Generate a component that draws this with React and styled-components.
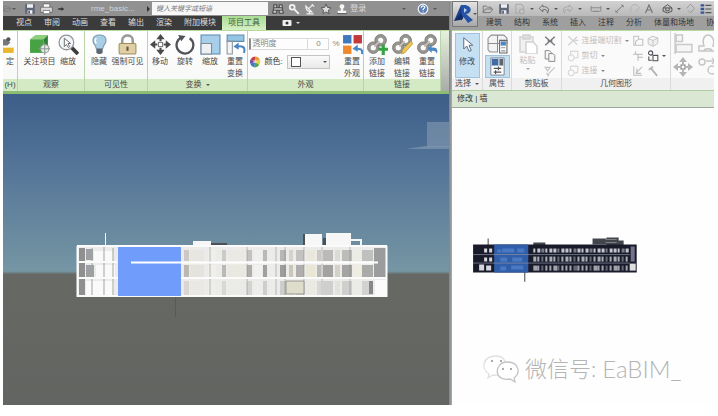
import React, { useState } from "react";
import styled, { createGlobalStyle } from "styled-components";

const GlobalStyle = createGlobalStyle`
  * {
    box-sizing: border-box;
  }
  body {
    margin: 0;
    background: #fff;
    font-family: "Liberation Sans", "Noto Sans CJK SC", sans-serif;
    font-size: 8px;
    line-height: 12px;
    color: #4a4a4a;
  }
  button, input, select {
    font: inherit;
    color: inherit;
    margin: 0;
    padding: 0;
    border: 0;
    background: none;
  }
  svg {
    display: block;
    flex: none;
  }
`;

/* ---------- icons ---------- */

const BLUE = "#4a87c4";
const PALE = "#d2d2d2";

const shapes = {
  folder: (
    <g fill="none" stroke="currentColor" strokeWidth="1.5">
      <path d="M2 16V5h5l2 2h6v3M2 16l4-6h12l-4 6z" />
    </g>
  ),
  save: (
    <g>
      <path d="M2 2h16v16H2z" fill="#5d6576" />
      <path d="M5 2h10v6H5zM6 12h8v6H6z" fill="#eef0f4" />
      <path d="M7 13h3v5H7z" fill="#5d6576" />
    </g>
  ),
  print: (
    <g stroke="#555" strokeWidth="1">
      <path d="M5 3h10v6H5z" fill="#fff" />
      <path d="M1 8h18v8H1z" fill="#d9d9d9" />
      <path d="M5 13h10v5H5z" fill="#fff" />
    </g>
  ),
  arrow: <path d="M3 8h8V5l7 5-7 5v-3H3z" fill="#333" />,
  binoculars: (
    <g fill="#ccc" stroke="#3c3c3c" strokeWidth="1.6">
      <path d="M3 3h5v5h4V3h5v5l2 9h-7v-5H8v5H1l2-9zM3 8h5M12 8h5M3 12h5M12 12h5" />
    </g>
  ),
  key: (
    <g fill="none" stroke="#f2f2f2" strokeWidth="3">
      <circle cx="7" cy="7" r="4" />
      <path d="M10 10l8 8" />
    </g>
  ),
  satellite: (
    <g fill="none" stroke="#eee" strokeWidth="2">
      <path d="M3 5c0 7 4 10 10 10zM8 9l7-6M4 18h12M9 14v4M13 2l4 4" />
    </g>
  ),
  star: (
    <path d="M10 2l2.4 5.4 5.9.6-4.4 4 1.3 5.8-5.2-3-5.2 3L6 12 1.700 8l5.900-.6z" fill="#ddd" stroke="#444" strokeWidth="1.3" />
  ),
  person: (
    <g fill="#f5f5f5">
      <circle cx="10" cy="6" r="4" />
      <path d="M8 9h4v4h5v4H3v-4h5z" />
      <path d="M2 17h16v1.500H2z" fill="#555" />
    </g>
  ),
  help: (
    <g>
      <circle cx="10" cy="10" r="8" fill="#5d7fb5" stroke="#f0f3f8" strokeWidth="2" />
      <path d="M7 8c0-4 6-4 6-1 0 2-3 2-3 5M10 14v2" fill="none" stroke="#fff" strokeWidth="2" />
    </g>
  ),
  camera: (
    <g>
      <rect x="1" y="4" width="18" height="12" rx="2" fill="#eee" />
      <circle cx="10" cy="10" r="3" fill="#333" />
    </g>
  ),
  anchor: (
    <g>
      <path d="M0 5h6l4 3-3 3H0z" fill="#75777c" />
      <circle cx="8" cy="5" r="2" fill="#555" />
      <path d="M0 13h13v5H0z" fill="#e8b72d" />
    </g>
  ),
  cube: (
    <g>
      <path d="M1 5l5-4h12l-4 4z" fill="#8ed07b" />
      <path d="M1 5h13v13H1z" fill="#46a243" />
      <path d="M14 5l4-4v12l-4 5z" fill="#2f7f35" />
      <circle cx="15" cy="14" r="4" fill="#e4ebe5" stroke="#8b9a91" />
      <path d="M15 8v12M9 14h12" stroke="#8b9a91" />
    </g>
  ),
  zoom: (
    <g>
      <path d="M13 13l6 6" stroke="#3c3c3c" strokeWidth="3.500" />
      <circle cx="8" cy="8" r="7" fill="#f4f7f9" stroke="#90959a" strokeWidth="1.200" />
      <path d="M6 4v8l2-2 2 3 1-1-1.500-3H12z" fill="#fff" stroke="#555" strokeWidth=".8" />
    </g>
  ),
  bulb: (
    <g>
      <path d="M10 1c8 0 7 7 4 10l-1 3H7l-1-3C3 8 2 1 10 1z" fill="#a9cde4" stroke="#7b9bb0" />
      <path d="M7 4c-2 2-1 4 0 5" stroke="#fff" fill="none" strokeWidth="1.500" />
      <path d="M7 14h6v4l-2 1H9l-2-1z" fill="#5d6670" />
    </g>
  ),
  lock: (
    <g>
      <path d="M5 10V6c0-6 10-6 10 0v4" fill="none" stroke="#999" strokeWidth="2.400" />
      <rect x="2" y="9" width="16" height="10" rx="1" fill="#dfcfa3" stroke="#9d8e65" />
      <path d="M9 12h2v4H9z" fill="#62563a" />
    </g>
  ),
  move: (
    <g fill="currentColor">
      <path d="M10 0l4 5H6zM10 20l4-5H6zM0 10l5-4v8zM20 10l-5-4v8z" />
      <path d="M9 4h2v3H9zM9 13h2v3H9zM4 9h3v2H4zM13 9h3v2h-3z" />
      <rect x="8" y="8" width="4" height="4" fill="#fff" stroke="#777" />
    </g>
  ),
  rotate: (
    <g>
      <path d="M7 3a8 8 0 1 0 7 1" fill="none" stroke="#4f5357" strokeWidth="2.200" />
      <path d="M3 1l7 1-4 5z" fill="#4f5357" />
    </g>
  ),
  scale: (
    <g>
      <path d="M1 1h18v18H1z" fill="#a7cfea" stroke="#5288ad" />
      <path d="M1 9h10v10H1z" fill="#eef1f3" stroke="#7f8a91" />
    </g>
  ),
  resetTransform: (
    <g>
      <path d="M2 1h16v6H2z" fill="#94c5e4" stroke="#5e8cab" />
      <path d="M2 7h5v12H2z" fill="#f2f4f5" stroke="#8c9499" />
      <path d="M18 18c2-6-2-7-7-6" fill="none" stroke={BLUE} strokeWidth="2" />
      <path d="M8 12l5-4v7z" fill={BLUE} />
    </g>
  ),
  resetLook: (
    <g>
      <path d="M1 1h8v8H1z" fill="#3f79bd" />
      <path d="M11 1h8v8h-8z" fill="#c33a3c" />
      <path d="M1 11h8v8H1z" fill="#ef8b2c" />
      <path d="M19 19c1-5-2-5-5-5" fill="none" stroke={BLUE} strokeWidth="2" />
      <path d="M10 14l5-4v7z" fill={BLUE} />
    </g>
  ),
  wheel: (
    <g>
      <path d="M10 10V1a9 9 0 0 1 8 5z" fill="#eb9a33" />
      <path d="M10 10l8-4a9 9 0 0 1-1 9z" fill="#e6d23e" />
      <path d="M10 10l7 5a9 9 0 0 1-8 4z" fill="#53a34a" />
      <path d="M10 10l-1 9a9 9 0 0 1-7-6z" fill="#347bc2" />
      <path d="M10 10l-8 3a9 9 0 0 1 1-8z" fill="#744d9e" />
      <path d="M10 10L3 5a9 9 0 0 1 7-4z" fill="#c83a3f" />
      <circle cx="10" cy="9" r="3" fill="#fff" opacity=".5" />
    </g>
  ),
  chain: (
    <g fill="none" stroke="#97958f" strokeWidth="3">
      <circle cx="13" cy="6" r="4" />
      <circle cx="6" cy="13" r="4" />
      <circle cx="13" cy="6" r="5.500" stroke="#77756f" strokeWidth=".8" />
      <circle cx="6" cy="13" r="5.500" stroke="#77756f" strokeWidth=".8" />
      <path d="M7 12l5-5" stroke="#c0beb6" strokeWidth="2" />
    </g>
  ),
  cursor: (
    <path d="M5 1v15l4-4 3 7 3-1-3-7h5z" fill="#fff" stroke="#5c6b7c" strokeWidth="1.300" />
  ),
  typeProps: (
    <g fill="#f3f3f3" stroke="#8b8f94">
      <path d="M1 5l3-3h6v8H1zM10 2h6l3 3v5h-9zM1 10h9v8H3l-2-2z" />
      <path d="M12 7h7v12h-7z" fill="#fff" stroke="#666" />
      <path d="M13 8h5v4h-5z" fill={BLUE} stroke="none" />
      <path d="M13.500 14h4M13.500 17h4" />
    </g>
  ),
  props: (
    <g>
      <path d="M3 1h14v18H3z" fill="#fff" stroke="#78818b" />
      <path d="M4 2h7v7H4z" fill="#3f6ca5" />
      <path d="M12 2h4v7h-4z" fill="#5c6570" />
      <path d="M6 12h8M6 16h8M11 10v4M8 14v4" stroke="#555" strokeWidth="1.300" />
    </g>
  ),
  paste: (
    <g fill="#f1f1f1" stroke={PALE} strokeWidth="1.500">
      <path d="M2 3h13v15H2z" />
      <path d="M5 1h7v4H5z" fill="#ddd" />
      <path d="M8 8h7l4 4v8H8z" fill="#fff" />
    </g>
  ),
  cut: (
    <g fill="none" stroke="#777b80" strokeWidth="2.500">
      <path d="M2 3l16 14M18 3L2 17M6 10h8" />
    </g>
  ),
  copy: (
    <g fill="#f6f6f6" stroke="#85888b" strokeWidth="1.600">
      <path d="M2 1h7l3 3v11H2z" />
      <path d="M8 6h7l3 3v10H8z" />
    </g>
  ),
  brush: (
    <g fill="none" stroke="#c4c4c4" strokeWidth="2">
      <path d="M2 4h8l-4 6zM18 4l-9 9-3 6M4 13l4 5" />
    </g>
  ),
  cope: (
    <g fill="none" stroke={PALE} strokeWidth="2">
      <path d="M2 2l15 14M17 3L2 17M10 9h9" />
    </g>
  ),
  join: (
    <g fill="#fafafa" stroke="#cfcfcf" strokeWidth="1.600">
      <path d="M6 2h12v11H6z" />
      <circle cx="7" cy="13" r="5" />
    </g>
  ),
  wallJoin: (
    <g fill="none" stroke="#c2c2c2" strokeWidth="1.800">
      <path d="M3 2h8v5h7v10H3zM11 7l-5 4v6" />
    </g>
  ),
  box: (
    <g fill="#f0f0f0" stroke="#c4c4c4" strokeWidth="1.600">
      <path d="M2 6l7-4 9 3v9l-8 5-8-4zM2 6l8 3 8-4M10 9v10" />
    </g>
  ),
  beam: (
    <g fill="none" stroke="#b8b8b8" strokeWidth="1.700">
      <path d="M2 7h16M10 7v11M6 2v5M10 12h8" />
    </g>
  ),
  paint: (
    <g fill="none" stroke="#4f5357" strokeWidth="1.800">
      <circle cx="6" cy="5" r="3.500" />
      <path d="M10 9h8v9h-8zM3 11v6h5" />
    </g>
  ),
  split: (
    <g fill="none" stroke="#bdbdbd" strokeWidth="1.800">
      <path d="M3 2v15h14M6 14L17 3M8 6v8h7" />
    </g>
  ),
  hammer: (
    <g stroke="#b4b4b4" strokeWidth="3" fill="none">
      <path d="M3 8l7-5M7 6l10 12" />
    </g>
  ),
  align: (
    <g fill="#f6f6f6" stroke="#c9c9c9" strokeWidth="1.400">
      <path d="M2 0v20" />
      <path d="M3 2h6v6H3zM3 11h15v7H3z" />
    </g>
  ),
  offset: (
    <g fill="none" stroke="#c6c6c6" strokeWidth="1.500">
      <path d="M1 18h18v-5h-4c2-6-1-11-5-11S4 7 6 13H1zM6 18c0-3 8-3 8 0" />
    </g>
  ),
  circles: (
    <g fill="none" stroke="#c6c6c6" strokeWidth="1.500">
      <circle cx="4" cy="6" r="3" />
      <circle cx="14" cy="14" r="4" />
      <path d="M8 5h9l-3-3M17 5l-3 3" />
    </g>
  ),
  sync: (
    <g fill="none" stroke="#a9a9a9" strokeWidth="1.700">
      <path d="M3 2h9l4 4v4M3 2v15h6" />
      <circle cx="13" cy="14" r="4" />
    </g>
  ),
  undo: <path d="M8 3L2 9l6 6v-4c5-1 8 1 8 6 4-8 0-11-8-11z" fill="none" stroke="#666" strokeWidth="1.500" />,
  redo: <path d="M12 3l6 6-6 6v-4c-5-1-8 1-8 6-4-8 0-11 8-11z" fill="none" stroke="#a5a5a5" strokeWidth="1.500" />,
  dimension: <path d="M2 5v9M18 5v9M2 8h16M4 14h12" fill="none" stroke="#8d8d8d" strokeWidth="1.800" />,
  line: <path d="M3 17L17 4M2 14l5 4M13 3l5 4" fill="none" stroke="#777" strokeWidth="1.800" />,
  tag: <path d="M4 16C-1 4 14-2 18 8c0 4-3 5-6 7" fill="none" stroke="#b0b0b0" strokeWidth="1.800" />,
  letter: <path d="M3 18L10 2l7 16M6 12h8" fill="none" stroke="#777" strokeWidth="2.400" />,
  view3d: (
    <g fill="none" stroke="#555" strokeWidth="1.800">
      <path d="M2 9l8-6 8 6v6l-8 3-8-3zM2 9h16M7 9v5h6V9" />
    </g>
  ),
  section: <path d="M10 2l7 8-7 8M3 10l7-8M10 18l-4-4" fill="none" stroke="#999" strokeWidth="1.800" />,
  thinLines: (
    <g>
      <path d="M1 2h6v4H1zM1 8h6v4H1zM1 14h6v4H1z" fill="#34569a" />
      <path d="M9 4h10M9 10h10M9 16h10" stroke="#555" strokeWidth="2" />
    </g>
  ),
  revit: (
    <g>
      <path d="M1 17L8 1h5l-1 10-4 6-1-4z" fill="#1d3f8c" />
      <path d="M8 1c12-1 12 8 5 9l7 6-5 3-6-8z" fill="#2553a8" />
      <path d="M11 4l3 2-3 3z" fill="#bcd0ee" />
      <path d="M1 17l7-8 2 6-3 1z" fill="#142c66" />
    </g>
  ),
};

const badges = {
  plus: <path d="M14 10h3v3h3v3h-3v4h-3v-4h-3v-3h3z" fill="#33a544" />,
  pencil: <path d="M9 19l1-4 8-8 2 2-8 9z" fill="#f0c851" stroke="#a38634" strokeWidth=".6" />,
  back: <path d="M10 14l4-4v3c5-1 6 2 5 6-1-3-3-3-5-3v2z" fill={BLUE} />,
};

function Icon({ name, size = 12, badge }) {
  return (
    <svg width={size} height={size} viewBox="0 0 20 20" aria-hidden="true">
      {shapes[name]}
      {badge && badges[badge]}
    </svg>
  );
}

/* ---------- frame ---------- */

const Desktop = styled.main`
  display: flex;
  height: 100vh;
  padding: 1px 4px 11px 3px;
  overflow: hidden;
`;

const AppWindow = styled.section`
  display: flex;
  flex-direction: column;
  flex: ${(p) => p.$share} 1 0;
  min-width: 0;
  overflow: hidden;
`;

const Splitter = styled.div`
  flex: none;
  width: 3px;
  background: linear-gradient(90deg, #7d8286, #a9acae);
`;

const Row = styled.div`
  display: flex;
  align-items: center;
  flex: none;
  gap: ${(p) => p.$gap || 0}px;
`;

const TitleBar = styled(Row)`
  height: 15px;
  padding-left: ${(p) => p.$pad || 0}px;
  background: ${(p) => (p.$light ? "linear-gradient(#d2d2d2, #bababa)" : "#919191")};
  white-space: nowrap;
`;

const BarButton = styled.button`
  display: flex;
  align-items: center;
  flex: none;
  color: ${(p) => p.$tone || "#777"};
`;

const Caret = styled.span`
  flex: none;
  width: 0;
  height: 0;
  border: 2px solid transparent;
  border-top-color: ${(p) => p.$tone || "#555"};
  border-bottom: 0;
`;

const Side = styled(Caret)`
  margin-right: 2px;
  border: 3px solid transparent;
  border-left-color: #333;
  border-right: 0;
`;

const FileName = styled.span`
  width: 56px;
  margin-left: 26px;
  color: #d4d4d4;
`;

const SearchBox = styled.input`
  width: 116px;
  height: 13px;
  padding: 0 4px;
  background: #f7f7f7;
  font-size: 7px;
  font-style: italic;
  &::placeholder {
    color: #777;
    opacity: 1;
  }
`;

const Spacer = styled.span`
  flex: ${(p) => p.$grow || 1};
`;

const Tabs = styled.nav`
  display: flex;
  flex: none;
  height: 14px;
  padding-left: ${(p) => p.$pad}px;
  background: ${(p) => (p.$light ? "#9f9f9f" : "#3b3b3b")};
  color: ${(p) => (p.$light ? "#333" : "#dedede")};
  overflow: hidden;
`;

const Tab = styled.button`
  flex: none;
  padding: 0 6px;
  white-space: nowrap;
  background: ${(p) => (p.$active ? "linear-gradient(#a9dc91, #d5f0c6)" : "none")};
  color: ${(p) => (p.$active ? "#3f5a35" : "inherit")};
`;

/* ---------- ribbon ---------- */

const Ribbon = styled.div`
  display: flex;
  flex: none;
  height: ${(p) => (p.$light ? 61 : 64)}px;
  border-top: 1px solid #b5da9e;
  border-bottom: ${(p) => (p.$light ? "1px solid #b0cda2" : "3px solid #8dbd73")};
  background: ${(p) => (p.$light ? "#fafafa" : "linear-gradient(#e5f1dc, #a9aba8)")};
  overflow: hidden;
`;

const PanelBox = styled.section`
  display: flex;
  flex-direction: column;
  flex: ${(p) => (p.$grow ? "1 0 auto" : "none")};
  width: ${(p) => p.$width}px;
  border-right: 1px solid ${(p) => (p.$light ? "#dadada" : "#b9d4a9")};
  background: ${(p) => (p.$light ? "#fafafa" : "linear-gradient(#fff, #f6f8f5)")};
`;

const PanelBody = styled.div`
  display: flex;
  justify-content: center;
  flex: 1;
  min-height: 0;
  padding-top: 2px;
  gap: ${(p) => p.$gap || 0}px;
`;

const PanelName = styled.h2`
  display: flex;
  align-items: center;
  justify-content: center;
  gap: 4px;
  height: 12px;
  margin: 0;
  font-size: 8px;
  font-weight: 400;
  white-space: nowrap;
  background: ${(p) => (p.$light ? "#f0f0f0" : "#d3eac5")};
`;

const ToolButton = styled.button`
  display: flex;
  flex-direction: column;
  align-items: center;
  gap: 1px;
  padding-top: 1px;
  white-space: pre;
  color: ${(p) => (p.$off ? "#bdbdbd" : "#4a4a4a")};
`;

const ChosenTool = styled(ToolButton)`
  width: 25px;
  height: ${(p) => p.$height}px;
  padding-top: ${(p) => p.$pad}px;
  gap: 4px;
  background: #c5dff3;
  border: 1px solid #9fc3df;
  justify-content: flex-start;
`;

const Column = styled.div`
  display: flex;
  flex-direction: column;
  align-items: ${(p) => p.$align || "flex-start"};
  gap: ${(p) => p.$gap || 0}px;
  padding-top: ${(p) => p.$top || 0}px;
`;

const SmallTool = styled.button`
  display: flex;
  align-items: center;
  gap: 3px;
  height: 15px;
  color: #bdbdbd;
  white-space: nowrap;
`;

const Field = styled.label`
  display: flex;
  align-items: center;
  width: 91px;
  height: 14px;
  color: #888;
`;

const FieldName = styled.span`
  flex: 1;
  height: 12px;
  padding-left: 2px;
  border: 1px solid #dadada;
  border-left: 2px solid #8c8c8c;
  line-height: 10px;
`;

const AmountInput = styled.input`
  width: 21px;
  height: 12px;
  margin-right: 3px;
  border: 1px solid #dadada;
  border-left: 0;
  text-align: center;
`;

const ColourLabel = styled.label`
  display: flex;
  align-items: center;
  gap: 4px;
  color: #333;
`;

const ColourPicker = styled.span`
  display: flex;
  align-items: center;
  width: 43px;
  height: 14px;
  padding-left: 3px;
  border: 1px solid #c4c4c4;
  background: linear-gradient(#fafafa, #e8e8e8);
`;

const Swatch = styled.span`
  width: 10px;
  height: 10px;
  border: 1px solid #555;
  background: #fff;
`;

const ColourSelect = styled.select`
  flex: 1;
  width: 10px;
  height: 12px;
  appearance: none;
  color: transparent;
`;

const Options = styled.div`
  flex: none;
  height: 17px;
  padding: 2px 5px;
  border-bottom: 1px solid #9ba79a;
  background: #d9e7d3;
  color: #333;
`;

const RevitHeader = styled.header`
  display: flex;
  flex: none;
  height: 29px;
  background: #9f9f9f;
`;

const HeaderRows = styled.div`
  flex: 1;
  min-width: 0;
  overflow: hidden;
`;

const RevitMenu = styled.button`
  display: flex;
  align-items: center;
  flex: none;
  width: 26px;
  height: 26px;
  border: 1px solid #777;
  background: linear-gradient(#e2e2e2, #a9a9a9);
`;

/* ---------- viewports ---------- */

const SkyView = styled.div`
  flex: 1;
  min-height: 0;
  background: linear-gradient(#3c5e88 0%, #567699 25%, #7596a3 57%, #666864 58%, #636562 100%);
`;

const SheetView = styled.div`
  display: flex;
  flex-direction: column;
  flex: 1;
  min-height: 0;
  background: #fefefe;
`;

const Scene = styled.svg`
  width: 100%;
  height: ${(p) => p.$height || "100%"};
`;

const Watermark = styled.p`
  display: flex;
  align-items: center;
  flex: none;
  margin: auto 0 20px 31px;
  font: 22px/32px Lato, "Noto Sans CJK SC", sans-serif;
  font-weight: 300;
  white-space: pre;
  color: #b4b4b4;
`;

const WeChat = styled.svg`
  margin-right: 6px;
`;

const Account = styled.span`
  font-size: 24px;
`;

const leftTabs = ["视点", "审阅", "动画", "查看", "输出", "渲染", "附加模块", "项目工具"];
const rightTabs = ["建筑", "结构", "系统", "插入", "注释", "分析", "体量和场地", "协"];

// x, width and tone of the facade bays, repeated on each storey
const bays = [
  [184, 5, "#b4b2ad"], [190, 14, "#e4e3da"], [208, 8, "#f1f0e9"], [222, 4, "#b5b4b0"],
  [228, 17, "#e9e8e0"], [247, 5, "#a9a7a3"], [254, 8, "#f3f2ee"], [263, 4, "#989898"],
  [269, 9, "#ededea"], [280, 6, "#969593"], [289, 4, "#c6c3b3"], [296, 8, "#a8a7a5"],
  [306, 9, "#e9e6d4"], [317, 4, "#b5b3ac"], [323, 10, "#9b9a98"], [335, 5, "#d2cfc4"],
  [342, 10, "#9c9c9a"], [354, 7, "#efede0"], [362, 11, "#a3a3a1"],
];

function Building() {
  return (
    <Scene viewBox="3 94 446 311" role="img" aria-label="建筑立面">
      <path d="M406 149l20-3h23v3h-20z" fill="#91a9bb" opacity=".5" />
      <path d="M427 122h22v25h-22z" fill="#8097af" opacity=".65" />
      <path d="M432 129h12M432 136h12M435 126v14M441 126v14" stroke="#6c86a1" opacity=".6" />
      <path d="M105 233h1v13h-1zM193 241h18v5h-18zM305 234h17v12h-17zM326 233h25v13h-25z" fill="#f7f7f7" />
      <path d="M211 243h16v2h-16zM303 234h2v12h-2zM323 238h3v8h-3z" fill="#4b5256" />
      <path d="M351 240h10v6" fill="none" stroke="#f5f5f5" strokeWidth="2" />
      <path d="M77 245h310v52H77z" fill="#ebebea" />
      <path d="M79 248h6v47h-6z" fill="#8f8f90" />
      <path d="M86 249h7v11h-7zM86 265h8v12h-8z" fill="#9ca0a3" />
      <path d="M94 251h19v10H94zM96 265h19v12H96zM86 281h28v14H86z" fill="#fafafa" />
      <path d="M92 248v48M104 246v50M113 248v48" stroke="#a2a3a3" />
      {bays.map(([x, w, tone]) => (
        <g key={x} fill={tone}>
          <rect x={x} y="250" width={w} height="11" opacity=".6" />
          <rect x={x} y="265" width={w} height="12" opacity=".9" />
          <rect x={x} y="281" width={w} height="14" opacity=".35" />
        </g>
      ))}
      <path d="M210 247v48M247 247v48M276 247v48M285 247v48M304 247v48M322 247v48M350 247v48" stroke="#838383" opacity=".5" />
      <path d="M286 281h18v13h-18z" fill="#dedccb" stroke="#807e75" strokeWidth=".7" />
      <path d="M374 248h12v29h-12z" fill="#9b9c9d" />
      <path d="M375 280h11v15h-11z" fill="#fbfbfb" />
      <path d="M369 281h4v13h-4z" fill="#888" />
      <path d="M77 262h40M77 278h310M77 246h310M77 296h310M77.500 246v51M386.500 246v51" stroke="#fbfbfb" strokeWidth="2" />
      <path d="M118 247h63v49h-63z" fill="#709dfc" />
      <path d="M131 262.500h247" stroke="#fff" strokeWidth="2" />
      <path d="M175.500 297v20" stroke="#50534f" opacity=".6" />
    </Scene>
  );
}

function DarkBuilding() {
  const panes = Array.from({ length: 24 }, (_, i) => 533 + i * 4);
  return (
    <Scene $height="auto" viewBox="452 108 261 190" role="img" aria-label="建筑线框">
      <path d="M488 238v8M524.500 271v10" stroke="#444" />
      <path d="M533 242h12v4h-12zM592 238h14v6h-14zM606 237h12v9h-12zM618 240h5v5h-5z" fill="#42464c" />
      <path d="M605 239h11M605 242h11" stroke="#a7a7a7" strokeWidth=".6" />
      <path d="M473 244h163v28H473z" fill="#191b2a" />
      <path d="M484 248h3v4h-3zM489 248h3v4h-3zM484 257h3v4h-3zM489 257h3v4h-3zM479 264h5v6h-5zM486 265h5v5h-5z" fill="#d6d6dc" />
      {panes.map((x, i) => (
        <g key={x} fill={i % 4 === 2 ? "#777b88" : "#c4c5cc"}>
          <rect x={x} y="248" width={i % 3 ? 3 : 2} height="4" />
          <rect x={x} y="256" width={i % 4 ? 2 : 3} height="5" opacity=".85" />
          <rect x={x} y="265" width={i % 5 ? 2 : 4} height="5" opacity=".8" />
        </g>
      ))}
      <path d="M494 244h34v28h-34z" fill="#315ea9" />
      <path d="M497 249h4v3h-4zM502 248h12v4h-12zM517 248h7v4h-7zM500 257h7v4h-7zM512 257h10v4h-10zM500 266h6v4h-6zM511 265h12v4h-12z" fill="#4a78c2" />
      <path d="M630 246h4v15h-4z" fill="#73738b" />
      <path d="M629 263h6v7h-6z" fill="#dedede" />
      <path d="M473 254h156M473 262.500h156" stroke="#8a91a5" strokeWidth=".7" />
    </Scene>
  );
}

function Panel({ name, width, gap, light, more, grow, children }) {
  return (
    <PanelBox $width={width} $light={light} $grow={grow}>
      <PanelBody $gap={gap}>{children}</PanelBody>
      <PanelName $light={light}>
        {name}
        {more && <Caret />}
      </PanelName>
    </PanelBox>
  );
}

function Tool({ icon, badge, label, size = 21, off }) {
  return (
    <ToolButton $off={off}>
      <Icon name={icon} badge={badge} size={size} />
      <span>{label}</span>
    </ToolButton>
  );
}

function Navisworks() {
  const [tab, setTab] = useState("项目工具");
  const [amount, setAmount] = useState("0");

  return (
    <AppWindow $share={446}>
      <TitleBar>
        <BarButton aria-label="打开"><Icon name="folder" size={9} /></BarButton>
        <Row $gap={4}>
          <Caret />
          <span />
          <BarButton aria-label="保存"><Icon name="save" size={12} /></BarButton>
          <BarButton aria-label="打印"><Icon name="print" size={13} /></BarButton>
          <BarButton aria-label="更多"><Icon name="arrow" size={8} /></BarButton>
        </Row>
        <FileName>rme_basic...</FileName>
        <Side />
        <SearchBox aria-label="搜索" placeholder="键入关键字或短语" />
        <Row $gap={4}>
          <span />
          <BarButton aria-label="查找"><Icon name="binoculars" /></BarButton>
          <BarButton aria-label="钥匙"><Icon name="key" /></BarButton>
          <BarButton aria-label="通讯中心"><Icon name="satellite" /></BarButton>
          <BarButton aria-label="收藏"><Icon name="star" /></BarButton>
          <BarButton $tone="#d8d8d8"><Icon name="person" />&nbsp;登录</BarButton>
        </Row>
        <Spacer $grow={3} />
        <Caret />
        <Spacer />
        <Row $gap={4}>
          <BarButton aria-label="帮助"><Icon name="help" /></BarButton>
          <Caret />
        </Row>
        <Spacer />
      </TitleBar>

      <Tabs $pad={7}>
        {leftTabs.map((name) => (
          <Tab key={name} $active={name === tab} onClick={() => setTab(name)}>
            {name}
          </Tab>
        ))}
        <Row $gap={4}>
          <Spacer />
          <span />
          <span />
          <span />
          <BarButton aria-label="录制"><Icon name="camera" size={10} /></BarButton>
          <Caret $tone="#ddd" />
        </Row>
      </Tabs>

      <Ribbon>
        <Panel name="(H)" width={15}>
          <Tool icon="anchor" label="定" />
        </Panel>
        <Panel name="观察" width={67} gap={2}>
          <Tool icon="cube" label="关注项目" />
          <Tool icon="zoom" label="缩放" />
        </Panel>
        <Panel name="可见性" width={63} gap={2}>
          <Tool icon="bulb" label="隐藏" />
          <Tool icon="lock" label="强制可见" />
        </Panel>
        <Panel name="变换" width={100} gap={4} more>
          <Tool icon="move" label="移动" />
          <Tool icon="rotate" label="旋转" />
          <Tool icon="scale" label="缩放" />
          <Tool icon="resetTransform" label={"重置\n变换"} />
        </Panel>
        <Panel name="外观" width={116} gap={2}>
          <Column $gap={4} $top={4}>
            <Field>
              <FieldName>透明度</FieldName>
              <AmountInput value={amount} onChange={(e) => setAmount(e.target.value)} />
              %
            </Field>
            <ColourLabel>
              <Icon name="wheel" size={12} />
              颜色:
              <ColourPicker>
                <Swatch />
                <ColourSelect defaultValue="white">
                  <option value="white">白</option>
                  <option value="grey">灰</option>
                </ColourSelect>
                <Caret />
                &nbsp;
              </ColourPicker>
            </ColourLabel>
          </Column>
          <Tool icon="resetLook" label={"重置\n外观"} size={21} />
        </Panel>
        <Panel name="链接" width={77} gap={4}>
          <Tool icon="chain" badge="plus" label={"添加\n链接"} />
          <Tool icon="chain" badge="pencil" label={"编辑\n链接"} />
          <Tool icon="chain" badge="back" label={"重置\n链接"} />
        </Panel>
      </Ribbon>

      <SkyView>
        <Building />
      </SkyView>
    </AppWindow>
  );
}

function Revit() {
  return (
    <AppWindow $share={262}>
      <RevitHeader>
        <RevitMenu aria-label="应用程序菜单">
          <Icon name="revit" size={20} />
          <Caret />
        </RevitMenu>
        <HeaderRows>
          <TitleBar $light $gap={4} $pad={4}>
            <BarButton aria-label="打开"><Icon name="folder" /></BarButton>
            <BarButton aria-label="保存"><Icon name="save" /></BarButton>
            <BarButton aria-label="同步"><Icon name="sync" /></BarButton>
            <Caret />
            <BarButton aria-label="放弃"><Icon name="undo" /></BarButton>
            <Caret />
            <BarButton aria-label="重做"><Icon name="redo" /></BarButton>
            <Caret />
            <span />
            <BarButton aria-label="测量"><Icon name="dimension" /></BarButton>
            <Caret />
            <BarButton aria-label="对齐标注"><Icon name="line" size={11} /></BarButton>
            <BarButton aria-label="标记"><Icon name="tag" size={11} /></BarButton>
            <BarButton aria-label="文字"><Icon name="letter" size={10} /></BarButton>
            <span />
            <BarButton aria-label="三维视图"><Icon name="view3d" size={11} /></BarButton>
            <Caret />
            <BarButton aria-label="剖面"><Icon name="section" size={11} /></BarButton>
            <BarButton aria-label="细线"><Icon name="thinLines" /></BarButton>
          </TitleBar>
          <Tabs $light $pad={2}>
            {rightTabs.map((name) => (
              <Tab key={name}>{name}</Tab>
            ))}
          </Tabs>
        </HeaderRows>
      </RevitHeader>

      <Ribbon $light>
        <Panel light name="选择" width={31} more>
          <ChosenTool $height={45} $pad={3}>
            <Icon name="cursor" size={15} />
            修改
          </ChosenTool>
        </Panel>
        <Panel light name="属性" width={29}>
          <Column $gap={1} $align="center">
            <BarButton aria-label="类型属性"><Icon name="typeProps" size={21} /></BarButton>
            <ChosenTool $height={23} $pad={1} aria-label="属性">
              <Icon name="props" size={19} />
            </ChosenTool>
          </Column>
        </Panel>
        <Panel light name="剪贴板" width={50} gap={6}>
          <ToolButton $off>
            <Icon name="paste" size={20} />
            粘贴
            <Caret $tone="#aaa" />
          </ToolButton>
          <Column>
            <SmallTool aria-label="剪切到剪贴板"><Icon name="cut" /></SmallTool>
            <SmallTool aria-label="复制"><Icon name="copy" /></SmallTool>
            <SmallTool aria-label="匹配类型"><Icon name="brush" /></SmallTool>
          </Column>
        </Panel>
        <Panel light name="几何图形" width={109} gap={3}>
          <Column>
            <SmallTool><Icon name="cope" />连接端切割 <Caret $tone="#888" /></SmallTool>
            <SmallTool><Icon name="join" />剪切 <Caret $tone="#888" /></SmallTool>
            <SmallTool><Icon name="join" />连接 <Caret $tone="#888" /></SmallTool>
          </Column>
          <Column>
            <SmallTool aria-label="墙连接"><Icon name="wallJoin" /></SmallTool>
            <SmallTool aria-label="梁连接"><Icon name="beam" /></SmallTool>
            <SmallTool aria-label="拆分面"><Icon name="split" /></SmallTool>
          </Column>
          <Column>
            <SmallTool aria-label="屋顶连接"><Icon name="box" /></SmallTool>
            <SmallTool aria-label="填色"><Icon name="paint" /><Caret /></SmallTool>
            <SmallTool aria-label="拆除"><Icon name="hammer" /></SmallTool>
          </Column>
        </Panel>
        <Panel light name="" width={50} gap={4} grow>
          <Column $gap={3}>
            <BarButton aria-label="对齐"><Icon name="align" size={21} /></BarButton>
            <BarButton aria-label="移动" $tone="#b5b5b5"><Icon name="move" size={20} /></BarButton>
          </Column>
          <Column $gap={3}>
            <BarButton aria-label="偏移"><Icon name="offset" size={20} /></BarButton>
            <BarButton aria-label="复制图元"><Icon name="circles" size={20} /></BarButton>
          </Column>
        </Panel>
      </Ribbon>
      <Options>修改 | 墙</Options>

      <SheetView>
        <DarkBuilding />
        <Watermark>
          <WeChat width="36" height="30" viewBox="0 0 36 30" fill="#fff" stroke="#c3c3c3" strokeWidth="1.300">
            <path d="M6 20l-1 4 5-3C25 24 28 2 13 2-1 2-2 15 6 20z" stroke="#e0e0e0" />
            <path d="M31 24l1 4-5-3C10 28 11 8 24 8c12 0 14 11 7 16z" />
            <path d="M8 7h2M17 7h2M19 15h2M27 15h2" stroke="#aaa" strokeWidth="2" />
          </WeChat>
          微信号: <Account>EaBIM_</Account>
        </Watermark>
      </SheetView>
    </AppWindow>
  );
}

export default function App() {
  return (
    <>
      <GlobalStyle />
      <Desktop>
        <Navisworks />
        <Splitter />
        <Revit />
      </Desktop>
    </>
  );
}
